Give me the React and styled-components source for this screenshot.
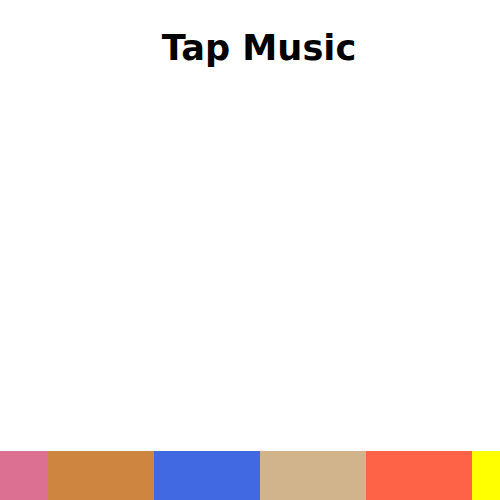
import React from "react";
import styled, { createGlobalStyle } from "styled-components";

const Global = createGlobalStyle`
  html, body { margin: 0; padding: 0; background: #fff; }
  body { font-family: "DejaVu Sans", sans-serif; }
`;

const Page = styled.div`
  height: 100vh;
  display: flex;
  flex-direction: column;
  overflow: hidden;
`;

const Header = styled.header`
  padding: 27px 0 0 18px;
  text-align: center;
`;

const Title = styled.h1`
  margin: 0;
  font-family: "DejaVu Sans", sans-serif;
  font-weight: bold;
  font-size: 35.2px;
  line-height: normal;
  color: #000;
`;

const Stage = styled.main`
  flex: 1;
`;

const Keys = styled.div`
  display: flex;
  height: 49px;
  overflow: hidden;
`;

const Key = styled.div`
  flex: 0 0 ${(p) => p.$w}px;
  height: 100%;
  background: ${(p) => p.$color};
`;

const keys = [
  { color: "#DB7093", w: 48 },
  { color: "#CD853F", w: 105.5 },
  { color: "#4169E1", w: 106.5 },
  { color: "#D2B48C", w: 106 },
  { color: "#FF6347", w: 106 },
  { color: "#FFFF00", w: 106 },
];

export default function App() {
  return (
    <>
      <Global />
      <Page>
        <Header>
          <Title>Tap Music</Title>
        </Header>
        <Stage />
        <Keys>
          {keys.map((k, i) => (
            <Key key={i} $color={k.color} $w={k.w} />
          ))}
        </Keys>
      </Page>
    </>
  );
}
